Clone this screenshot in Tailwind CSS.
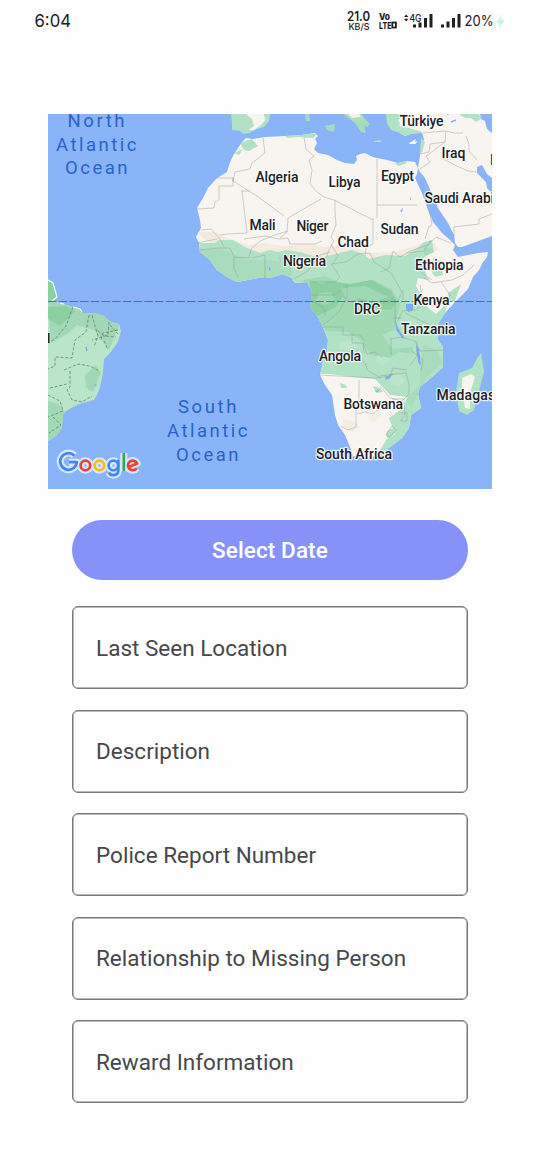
<!DOCTYPE html>
<html lang="en">
<head>
<meta charset="utf-8">
<meta name="viewport" content="width=device-width, initial-scale=1">
<title>Missing person report</title>
<script src="https://cdn.jsdelivr.net/npm/@tailwindcss/browser@4"></script>
</head>
<body class="min-h-screen bg-[#fefefe] font-[Roboto,sans-serif]">
<div class="flex h-[1170px] w-[540px] flex-col overflow-hidden">
  <header class="h-[114px] shrink-0">
    <svg class="block h-[44px] w-[540px]" viewBox="0 0 540 44" font-family="Inter, sans-serif" fill="#202020">
      <text x="34.500" y="27" font-size="17.500" textLength="36.500" lengthAdjust="spacingAndGlyphs">6:04</text>
      <g font-weight="600">
        <text x="347" y="21" font-size="12.500" textLength="23" lengthAdjust="spacingAndGlyphs">21.0</text>
        <text x="348.500" y="30" font-size="9" font-weight="500" textLength="21" lengthAdjust="spacingAndGlyphs">KB/S</text>
      </g>
      <g font-weight="800">
        <text x="379" y="20" font-size="9.500" textLength="11" lengthAdjust="spacingAndGlyphs">Vo</text>
        <text x="379" y="28.500" font-size="9.500" textLength="12.500" lengthAdjust="spacingAndGlyphs">LTE</text>
      </g>
      <rect x="392.300" y="22.500" width="3.600" height="5" fill="none" stroke="#202020" stroke-width="1.800"/>
      <path d="M404 17l2.200-2.600 2.200 2.600zM404 18.800l2.200 2.600 2.200-2.600z"/>
      <text x="409.500" y="21.500" font-size="10.500" font-weight="500" textLength="12" lengthAdjust="spacingAndGlyphs">4G</text>
      <path d="M413 24.500h3v3h-3zM418.500 22.500h3v5h-3zM424 18h3v9.500h-3zM429.500 14h3v13.500h-3zM441 24.500h3v3h-3zM446.500 21.500h3v6h-3zM452 18h3v9.500h-3zM457.500 14h3v13.500h-3z"/>
      <text x="464.500" y="25.500" font-size="14" textLength="29" lengthAdjust="spacingAndGlyphs">20%</text>
      <path d="M502 14l-5.500 9h3.500l-1.500 6 6-9h-3.500z" fill="#c9f3e2"/>
    </svg>
  </header>

  <main class="flex flex-col items-center">
    <svg class="block h-[375px] w-[444px] shrink-0" viewBox="48 114 444 375" font-family="Roboto, sans-serif">
      <defs>
        <path id="africa" d="M242 142L246 138 253 139 265 137 285 136 302 135 315 133 318 136 315 139 317 143 314 149 318 153 328 155 337 160 345 163 354 164 357 160 356 156 360 154 365 153 373 157 377 158 387 160 398 163 407 161 415 162 418 168 417 174 415 178 422 193 428 210 433 222 442 233 450 240 455 245 453 250 458 257 468 255 478 253 488 252 487 257 483 262 479 270 473 277 468 289 461 296 455 302 445 313 438 324 438 340 443 347 443 367 432 377 420 387 418 394 421 408 411 415 409 428 402 438 390 447 380 455 365 458 357 457 353 456 350 447 345 435 338 425 335 415 332 395 325 385 320 375 323 361 327 352 328 340 323 327 318 317 310 307 312 293 311 290 307 282 295 283 292 278 283 274 270 278 265 277 253 279 237 282 227 277 217 270 210 260 200 252 199 243 196 237 201 228 200 220 197 208 203 198 208 188 217 178 227 172 230 162 234 154Z"/>
        <clipPath id="africaClip"><use href="#africa"/></clipPath>
        <path id="brazil" d="M48 303L54 301 60 303 64 304 73 307 80 309 83 313 95 313 104 316 111 322 119 324 121 331 118 342 110 353 104 359 103 373 100 387 97 395 94 400 79 404 66 411 63 415 62 428 56 436 48 441Z"/>
        <clipPath id="brazilClip"><use href="#brazil"/></clipPath>
      </defs>
      <rect x="48" y="114" width="444" height="375" fill="#8ab4f8"/>

      <!-- Europe -->
      <path d="M231 114H270L269 121 264 127 257 129 249 133 244 134 240 131 232 130 232 123Z" fill="#b2e2c5"/>
      <path d="M246 114H264L265 120 261 125 254 130 248 130 254 126 252 119Z" fill="#f8f4ee"/>
      <path d="M305 114H309L310 121 306 121ZM343 114H362L364 118 370 124 367 127 364 125 366 133 361 132 355 123ZM325 126L335 124 334 132 327 130Z" fill="#a8dcbc"/>
      <path d="M348 114H359L361 117 352 118Z" fill="#f5f0e8"/>
      <path d="M374 141l8-1-2 2-6 0z" fill="#b2e2c5"/>

      <!-- Middle East -->
      <path d="M387 114H492V236L462 247 458 247 455 243 454 235 448 223 442 214 438 208 433 196 425 178 420 172 418 168 421 150 424 139 422 133 412 133 405 136 398 132 392 130 388 122Z" fill="#f8f4f0"/>
      <path d="M386 114H406L398 120 402 127 420 128 422 133 411 134 405 136 398 132 391 130 387 123ZM421 138l4 4-3 11-2-2z" fill="#b2e2c5"/>
      <path d="M406 114H424L437 115 431 129 420 131 409 128 399 126 402 120Z" fill="#f8f4f0"/>
      <path d="M459 114H479L481 119 476 122 471 118 465 118Z" fill="#b2e2c5"/>
      <path d="M480 114H492V133L487 129 485 121 481 119ZM477 167l5-2 5 9 5 4v15l-5-5-1-6-6-6-3-3z" fill="#8ab4f8"/>
      <path d="M409 143l7-4-1 3 3-1-3 3-5 0z" fill="#f8f8f3"/>
      <path d="M448 113v2M451 122l5-2" fill="none" stroke="#8ab4f8" stroke-width="1.500"/>

      <use href="#africa" fill="#f8f4f0"/>
      <g clip-path="url(#africaClip)">
        <path d="M196 232L215 232 228 238 247 245 264 243 282 246 310 244 325 247 350 244 368 253 395 252 420 244 435 243 444 260 420 287 335 286 250 276Z" fill="#f4ebdf"/>
        <path d="M194 243L215 243 219 240 233 240 245 247 252 250 261 253 269 250 278 252 286 250 300 252 320 258 335 254 352 250 363 254 369 259 385 255 405 256 415 250 424 242 432 240 434 252 427 261 433 273 440 283 428 293 433 304 447 302 445 315 444 375 424 386 425 413 405 441 375 459 386 440 395 434 389 418 404 407 407 397 390 395 375 379 353 377 330 374 318 374V340L304 300 290 286 240 289 195 267Z" fill="#b2e2c5"/>
        <path d="M304 280L325 276 346 285 373 280 392 289 400 304 394 330 382 335 393 349 412 347 414 354 399 352 390 358 371 355 361 340 347 332 326 331 300 300Z" fill="#a0d9b4"/>
        <path d="M196 250L218 249 233 253 245 260 269 260 285 263 291 279 240 287 202 265ZM278 254L291 258 292 276 282 272ZM424 247L433 249 433 262 445 272 437 278 424 270ZM422 290L433 287 439 300 421 294ZM423 345L437 350 443 363 427 377 420 390 411 408 406 400 420 384 420 374Z" fill="#a8dcbc"/>
        <path d="M310 280L322 284 329 281 350 284 371 280 391 291 397 301 391 310 360 306 342 297 336 307 313 318 309 303Z" fill="#8bd0a1"/>
        <path d="M340 288l25-2 24 11-15 5-15-4-10 5zM320 293l11-1 4 8-10 5-10-4z" fill="#9fd9b3"/>
        <path d="M240 143l12-4 6 7-9 5-5-1zM234 153l9-4-4 6z" fill="#b2e2c5"/>
        <path d="M395 163l13-3-3 4-7 2zM285 136l25-3 7 1-4 4-14-1-12 1z" fill="#b2e2c5"/>
        <path d="M340 383l6 2 1 3-6 0zM373 386l7 2 3 4-7 1zM387 431l8-4 0 6-7 6-2-4z" fill="#b2e2c5"/>
        <path d="M418 278l20 4 9 7-9 12 7 4-9 9-8-6-12-22z" fill="#f8f4f0"/>
        <path d="M440 249l17 12 22-5 0 10-20 22-22 4-11-17-2-18z" fill="#f8f4f0"/>
        <path d="M434 257l7 5 2 13-8 2-6-10zM448 293l13-9-6 17-6 1z" fill="#b2e2c5"/>
        <path d="M340 342l12-2 5 5-9 6-9-2zM378 354l13 5-8 6-8-4zM405 321l10-1 5 8-9 3zM389 377l10-3 6 7-6 5-8-2z" fill="#c0e8cf" opacity=".7"/>
        <path d="M343 419l12 2 4 6-7 5-8-3zM367 417l10-4 5 2-9 8zM253 178l12-2 5 3-11 4z" fill="#f4ede4"/>
        <path d="M406 304h7v6l-4 2-3-3zM395 318l1 12 7 9 1-2-6-9zM416 345l2 17 3 4-2-17zM386 377l7-4-3 5-5 2zM375 391l4-1-1 2zM400 211l3-3-1 4zM410 196l1 4h-1zM269 266l2 4-2 0z" fill="#7aabf5"/>
      </g>

      <!-- Country borders -->
      <g fill="none" stroke="#8e9693" stroke-width=".7" stroke-linejoin="round" opacity=".6">
        <path d="M263 138l2 15-13 10-2 6-15 3-2 9 24 15 27 20M288 218l33-19M215 178h18v8h-14v14l-4 2-1 6-17 1M233 178v4M241 191h9M242 191l5 42-20 1-7 1M201 230l10-1 9 10 4 8M197 243l20-4M200 250l18-2 12 0 4 9 0 11 4 10M235 257l14 1 2-9 9-8 15-6 13-4M252 258l13-3 0 23M304 137l2 12 8 7M314 156l-5 4 3 10-2 14 6 7 8 6 10 3M334 200l39 20M377 159v59M377 205h40M373 218v26l-7 4-1 8M288 218l-1 14-7 6M335 200l0 12 1 13-5 12 3 4-5 9-3 8-7-1-12 3M244 239l21-3 14 3 9-1 2 6 25 0 7-3M294 279l14-8 12-16 10-3M331 244l7 12-6 9 8 12-5 5-22 0M331 264l15-2 12-8 12-1 4 9 17 11 7 12 4 7-4 9M381 272l8-4 4-17 7 6 10-6 18-6 8-8 15 6M407 253l17-2 7-11M425 260l-4 12 11 8M424 278l8 5 20-3 11-5 11-10M452 259l11 7M441 282l9 13-1 8M420 285l3 18-8 7-13 1-4 10M311 295l24 0 12-10 0 12-8 15-16 13M313 301l12 8 0 7M319 315M323 327h20v8l17 0 5 6M352 333v10l11 0 4 11 7-2 9 5M363 343l1 10M319 375l57 3 14-2 3-8 14 2M379 376l17-2 10-1 3 11 0 10-7 7-12-3-10-12M364 361l4 10 13 7M359 380v21h-3v26l-8 3-7-4M391 339l10-2 14 4 5 10 23-1M391 338v17M417 341l0 15-7 9M412 351l11 9-2 11M395 299v24M393 318h9M403 290v10M405 313l25 12 8 4M357 414l8-2 8 2 12-9 7-4M392 399l13 0M404 400l1 15-5 6M401 413h6v8h-6M388 432l4-6 4 4-6 7-4-2z"/>
        <path d="M423 133l22-2 10 2 8 0M446 131l-1 11-16 12-3 2 4 6-10 7M421 154l8-2 1-8 15-2M441 158l18 9 9 4 8 1M466 136l3 8 0 7 8 9M454 236l0-9 25-3 0-5 13-5M429 210l3 14-2 3M425 239l4-13"/>
      </g>

      <!-- South America -->
      <path d="M48 280l5 3 4 15-5 5-4 0z" fill="#8bd0a1"/>
      <use href="#brazil" fill="#b9e5c9"/>
      <g clip-path="url(#brazilClip)">
        <path d="M48 302h35l13 11 10 3 15 5-12 29-15-20-17-5-10 9-16 9zM85 375l11-10 5 8-8 19-7-4zM48 401l10 3 7 8-6 24-12 5z" fill="#a2d8b5"/>
        <path d="M48 307l18-1 9 5-15 15-12-7z" fill="#8bd0a1"/>
        <path d="M73 307l-7 19-11 13-7 4M89 315l-3 17-11 8-3 18-17-1 0 9-7 3M92 315l6 21-4 11M109 322l-1 13-16 5M118 330l-15 3-2 7M104 341l4 9M98 331l6 5 12 1M110 325l8 9M64 370l14-6 12 2 9 5M70 371v16l-3 3 5 10 10 2 10-6M50 388l17-4M48 395l12 6 3 10-15 6M53 417l8 8-12 8" fill="none" stroke="#65826e" stroke-width=".8" stroke-dasharray="3 1.800"/>
        <path d="M86 347l1 4M94 385h3" stroke="#70a4f1" stroke-width="1.200"/>
      </g>
      <path d="M48 280l5 3 4 14-5 4M60 303l4 1M73 307l7 2 2 3" fill="none" stroke="#f7fff7" stroke-width="1.200"/>
      <path d="M48 333v10" stroke="#1d2421" stroke-width="3"/>

      <!-- Madagascar -->
      <path d="M481 353l2 12 1 7-4 15-6 23-7 5-8-4-3-19 3-19 13-5 6-11z" fill="#b2e2c5"/>
      <path d="M462 378l9-4 4 3-5 16 0 16-5-1-3-22z" fill="#f8f4ee"/>

      <path d="M48 301.500h444" stroke="#a0507a" stroke-width="1.100" stroke-dasharray="8.500 2.200"/>

      <!-- Map labels -->
      <g fill="#2665c7" font-size="18.500">
        <text x="67.500" y="126.500" textLength="57">North</text>
        <text x="56" y="150.500" textLength="80.500">Atlantic</text>
        <text x="65" y="174" textLength="62.500">Ocean</text>
        <text x="178" y="413" textLength="58.500">South</text>
        <text x="167" y="437" textLength="80.500">Atlantic</text>
        <text x="176" y="460.500" textLength="62.500">Ocean</text>
      </g>
      <g fill="#202124" font-size="14" font-weight="500" stroke="#fff" stroke-opacity=".8" stroke-width="2.500" stroke-linejoin="round" paint-order="stroke">
        <text x="399.500" y="126" textLength="44">Türkiye</text>
        <text x="441.500" y="157.500" textLength="24">Iraq</text>
        <text x="255.500" y="181.500" textLength="43">Algeria</text>
        <text x="328.500" y="187" textLength="32">Libya</text>
        <text x="381" y="181" textLength="33">Egypt</text>
        <text x="424.500" y="203" textLength="77">Saudi Arabia</text>
        <text x="249.500" y="230" textLength="26">Mali</text>
        <text x="296.500" y="230.500" textLength="32">Niger</text>
        <text x="380.500" y="233.500" textLength="38">Sudan</text>
        <text x="337.500" y="246.500" textLength="31.500">Chad</text>
        <text x="283" y="266" textLength="43">Nigeria</text>
        <text x="415" y="270" textLength="48.500">Ethiopia</text>
        <text x="354" y="313.500" textLength="26.500">DRC</text>
        <text x="413.500" y="305" textLength="36">Kenya</text>
        <text x="401" y="334" textLength="54.500">Tanzania</text>
        <text x="319" y="360.500" textLength="42">Angola</text>
        <text x="436.500" y="400" textLength="79">Madagascar</text>
        <text x="343.500" y="409" textLength="59.500">Botswana</text>
        <text x="316" y="458.500" textLength="76">South Africa</text>
        <text x="490" y="164.500">Iran</text>
      </g>
      <!-- Google wordmark: pale halo beneath the coloured strokes -->
      <g fill="none" stroke-linejoin="round">
        <g stroke="#d9e7fd" stroke-width="7">
          <path d="M74.400 455.600A8.300 8.300 0 1 0 76.800 462.200H69M118.300 459.800V470.500C118.300 476 110.500 476.500 108.900 472.500M123.800 453V471.300M128.200 467.300L137.200 463.600A4.800 4.800 0 1 0 136.700 468.200"/>
          <circle cx="85.400" cy="465.500" r="4.800"/>
          <circle cx="99.400" cy="465.500" r="4.800"/>
          <circle cx="113.400" cy="465.500" r="4.800"/>
        </g>
        <g stroke-width="2.700">
          <path d="M74.400 455.600A8.300 8.300 0 1 0 76.800 462.200H69" stroke="#4285f4"/>
          <circle cx="85.400" cy="465.500" r="4.800" stroke="#ea4335"/>
          <circle cx="99.400" cy="465.500" r="4.800" stroke="#fbbc05"/>
          <path d="M118.300 459.800V470.500C118.300 476 110.500 476.500 108.900 472.500" stroke="#4285f4"/>
          <circle cx="113.400" cy="465.500" r="4.800" stroke="#4285f4"/>
          <path d="M123.800 453V471.300" stroke="#34a853"/>
          <path d="M128.200 467.300L137.200 463.600A4.800 4.800 0 1 0 136.700 468.200" stroke="#ea4335"/>
        </g>
      </g>
    </svg>

    <button class="mt-[31px] flex h-[60px] w-[396px] shrink-0 items-center justify-center rounded-full bg-[#8792f9] pt-[2px] text-[22.500px] font-medium tracking-[0.100px] text-white">Select Date</button>

    <form class="mt-[26px] flex w-[396px] flex-col gap-[20.500px] text-[22.500px] tracking-[0.010px] text-[#47474b]">
      <label class="flex h-[83px] items-center rounded-[6px] border border-[#77777c] pt-[2px] pl-[23px] shadow-[inset_0_0_0_0.500px_#77777c]">Last Seen Location</label>
      <label class="flex h-[83px] items-center rounded-[6px] border border-[#77777c] pt-[2px] pl-[23px] shadow-[inset_0_0_0_0.500px_#77777c]">Description</label>
      <label class="flex h-[83px] items-center rounded-[6px] border border-[#77777c] pt-[2px] pl-[23px] shadow-[inset_0_0_0_0.500px_#77777c]">Police Report Number</label>
      <label class="flex h-[83px] items-center rounded-[6px] border border-[#77777c] pt-[2px] pl-[23px] shadow-[inset_0_0_0_0.500px_#77777c]">Relationship to Missing Person</label>
      <label class="flex h-[83px] items-center rounded-[6px] border border-[#77777c] pt-[2px] pl-[23px] shadow-[inset_0_0_0_0.500px_#77777c]">Reward Information</label>
    </form>
  </main>
</div>
</body>
</html>
